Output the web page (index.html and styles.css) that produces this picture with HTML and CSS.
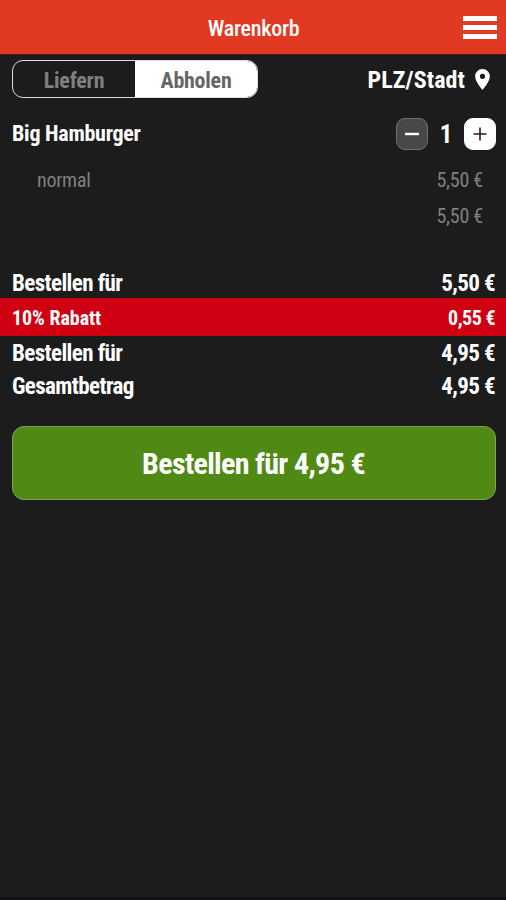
FILE: index.html
```html
<!DOCTYPE html>
<html lang="de">
<head>
    <meta charset="UTF-8">
    <title>Warenkorb</title>
    <link rel="stylesheet" href="styles.css">
</head>
<body>
    <header class="header">
        <h1 class="title">Warenkorb</h1>
        <button type="button" class="menu-btn" aria-label="Menü">
            <span></span>
            <span></span>
            <span></span>
        </button>
    </header>

    <div class="toolbar">
        <div class="switch">
            <button type="button" class="switch-item">Liefern</button>
            <button type="button" class="switch-item active">Abholen</button>
        </div>
        <div class="location">
            <span>PLZ/Stadt</span>
            <svg class="pin" viewBox="5 2 14 20" width="15" height="21">
                <path fill="#fff" d="M12 2C8.13 2 5 5.13 5 9c0 5.25 7 13 7 13s7-7.75 7-13c0-3.87-3.13-7-7-7zm0 9.5a2.5 2.5 0 0 1 0-5 2.5 2.5 0 0 1 0 5z"/>
            </svg>
        </div>
    </div>

    <div class="item">
        <span class="item-name">Big Hamburger</span>
        <div class="counter">
            <button type="button" class="count-btn minus" aria-label="Weniger">
                <svg viewBox="0 0 14 14" width="14" height="14"><path d="M0 7h14" stroke="#fff" stroke-width="2.4"/></svg>
            </button>
            <span class="count">1</span>
            <button type="button" class="count-btn plus" aria-label="Mehr">
                <svg viewBox="0 0 14 14" width="14" height="14"><path d="M.5 7h13M7 .5v13" stroke="#30181a" stroke-width="1.6"/></svg>
            </button>
        </div>
    </div>

    <div class="option">
        <span>normal</span>
        <span>5,50 €</span>
    </div>
    <div class="option option-sum">
        <span>5,50 €</span>
    </div>

    <div class="summary">
        <div class="row subtotal">
            <span>Bestellen für</span>
            <span>5,50 €</span>
        </div>
        <div class="row discount">
            <span>10% Rabatt</span>
            <span class="discount-value">0,55 €</span>
        </div>
        <div class="row">
            <span>Bestellen für</span>
            <span>4,95 €</span>
        </div>
        <div class="row total">
            <span>Gesamtbetrag</span>
            <span>4,95 €</span>
        </div>
    </div>

    <button type="button" class="order-btn">Bestellen für 4,95 €</button>
</body>
</html>
```

FILE: styles.css
```css
* {
    box-sizing: border-box;
}

body {
    margin: 0;
    height: 900px;
    overflow: hidden;
    background: #1c1c1c;
    border-bottom: 3px solid #121014;
    color: white;
    font-family: "Roboto Condensed", Roboto, sans-serif;
    font-stretch: 75%;
    font-size: 22px;
    letter-spacing: -0.25px;
}

button {
    padding: 0;
    border: none;
    font: inherit;
    letter-spacing: inherit;
    cursor: pointer;
}

.header {
    display: grid;
    grid-template-columns: 1fr auto 1fr;
    align-items: center;
    height: 55px;
    padding: 3px 9px 0 9px;
    background: #e23a22;
    border-bottom: 1px solid #4a1610;
}

.title {
    grid-column: 2;
    margin: 0;
    padding-left: 1px;
    font-size: 22px;
    font-weight: 500;
}

.menu-btn {
    justify-self: end;
    display: flex;
    flex-direction: column;
    gap: 4px;
    width: 34px;
    margin-bottom: 2px;
    background: none;
}

.menu-btn span {
    height: 5px;
    background: white;
}

.toolbar {
    display: flex;
    justify-content: space-between;
    align-items: center;
    height: 38px;
    margin-top: 5px;
    padding: 0 16px 0 12px;
}

.switch {
    display: flex;
    width: 246px;
    height: 38px;
    border: 1px solid #dcdcdc;
    border-radius: 11px;
    overflow: hidden;
}

.switch-item {
    flex: 1;
    padding-top: 2px;
    background: none;
    color: #808080;
    font-weight: bold;
}

.switch-item.active {
    background: white;
    color: #666;
}

.location {
    display: flex;
    align-items: center;
    gap: 10px;
    font-size: 24px;
    font-weight: bold;
    letter-spacing: 0.1px;
}

.location span {
    padding-top: 2px;
}

.pin {
    display: block;
}

.item {
    display: flex;
    justify-content: space-between;
    align-items: center;
    height: 32px;
    margin-top: 20px;
    padding: 0 10px 0 12px;
    font-weight: bold;
}

.item-name {
    padding-bottom: 2px;
}

.counter {
    display: flex;
    align-items: center;
}

.count-btn {
    display: flex;
    align-items: center;
    justify-content: center;
    width: 32px;
    height: 32px;
    border: 1px solid #707070;
    border-radius: 9px;
    background: #484848;
}

.count-btn.plus {
    border-color: white;
    background: white;
}

.count {
    width: 36px;
    font-size: 25px;
    text-align: center;
}

.option {
    display: flex;
    justify-content: space-between;
    height: 35px;
    margin-top: 13px;
    padding: 0 23px 0 37px;
    color: #808080;
    font-size: 20px;
    line-height: 35px;
}

.option-sum {
    justify-content: flex-end;
    margin-top: 0;
    line-height: 36px;
}

.summary {
    margin-top: 33px;
}

.row {
    display: flex;
    justify-content: space-between;
    height: 34px;
    padding: 0 11px 0 12px;
    font-size: 23px;
    font-weight: bold;
    line-height: 36px;
    letter-spacing: -0.6px;
}

.row.subtotal {
    height: 32px;
}

.row.discount {
    height: 38px;
    background: #d00013;
    font-size: 20px;
    line-height: 41px;
    letter-spacing: -0.05px;
}

.discount-value {
    letter-spacing: -0.5px;
}

.row.total {
    line-height: 34px;
}

.order-btn {
    display: block;
    width: 484px;
    height: 74px;
    margin: 22px 0 0 12px;
    padding-right: 1px;
    border: 1px solid #7ba454;
    border-radius: 12px;
    background: #508a14;
    color: white;
    font-size: 30px;
    font-weight: bold;
    letter-spacing: -0.65px;
}
```
